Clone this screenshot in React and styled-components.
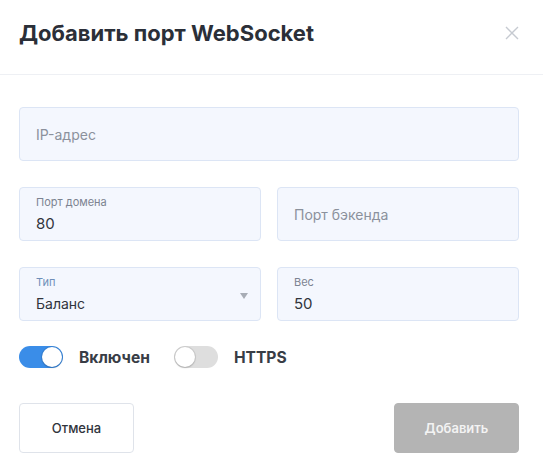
import React, { useState } from "react";
import styled, { createGlobalStyle } from "styled-components";

const Global = createGlobalStyle`
  html, body { margin: 0; padding: 0; background: #fff; }
  body { font-family: Inter, "Noto Sans", sans-serif; }
  * { box-sizing: border-box; }
`;

const Dialog = styled.div`
  width: 543px;
  background: #fff;
`;

const Header = styled.div`
  height: 75px;
  padding: 19px 24px 0 19px;
  display: flex;
  justify-content: space-between;
  align-items: flex-start;
  border-bottom: 1px solid #eef0f4;
`;

const Title = styled.h1`
  margin: 0;
  font-size: 22px;
  line-height: 28px;
  font-weight: 700;
  color: #2b2f38;
`;

const Close = styled.button`
  border: 0;
  background: none;
  padding: 0;
  margin-top: 7px;
  width: 14px;
  height: 14px;
  display: flex;
  cursor: pointer;
`;

const Body = styled.div`
  padding: 32px 24px 0 19px;
  display: flex;
  flex-direction: column;
  gap: 26px;
`;

const Row = styled.div`
  display: grid;
  grid-template-columns: ${(p) => (p.$cols === 2 ? "1fr 1fr" : "1fr")};
  gap: 16px;
`;

const Field = styled.div`
  position: relative;
  height: 54px;
  background: #f4f7fe;
  border: 1px solid #dce5f5;
  border-radius: 4px;
  padding: 0 16px;
  display: flex;
  flex-direction: column;
  justify-content: center;
`;

const Placeholder = styled.span`
  font-size: 14px;
  color: #8b919c;
`;

const Label = styled.span`
  font-size: 11px;
  line-height: 14px;
  color: ${(p) => (p.$accent ? "#6f8fb9" : "#7c8391")};
`;

const Value = styled.span`
  font-size: ${(p) => p.$size || 15}px;
  line-height: 20px;
  color: #30343c;
  margin-top: 5px;
`;

const Arrow = styled.span`
  position: absolute;
  right: 12px;
  top: 25px;
  width: 0;
  height: 0;
  border-left: 4px solid transparent;
  border-right: 4px solid transparent;
  border-top: 6px solid #a7acb5;
`;

const Toggles = styled.div`
  display: flex;
  align-items: center;
  margin-top: -1px;
`;

const ToggleGroup = styled.label`
  display: flex;
  align-items: center;
  gap: 16px;
  margin-right: 24px;
  cursor: pointer;
`;

const Track = styled.span`
  position: relative;
  width: 44px;
  height: 22px;
  border-radius: 11px;
  background: ${(p) => (p.$on ? "#3a8de8" : "#dedede")};
  display: block;
`;

const Knob = styled.span`
  position: absolute;
  top: 1px;
  left: ${(p) => (p.$on ? "23px" : "1px")};
  width: 20px;
  height: 20px;
  border-radius: 50%;
  background: #fff;
  box-shadow: 0 0 0 1px rgba(0, 0, 0, 0.08), 0 1px 2px rgba(0, 0, 0, 0.15);
`;

const ToggleText = styled.span`
  font-size: 15.6px;
  font-weight: 700;
  color: #383d46;
`;

const Footer = styled.div`
  display: flex;
  justify-content: space-between;
  margin-top: 9px;
`;

const Button = styled.button`
  height: 50px;
  width: ${(p) => p.$w}px;
  border-radius: 4px;
  font-family: inherit;
  font-size: 13px;
  font-weight: ${(p) => (p.$primary ? 600 : 500)};
  border: 1px solid ${(p) => (p.$primary ? "#b4b4b4" : "#dfe3ea")};
  background: ${(p) => (p.$primary ? "#b4b4b4" : "#fff")};
  color: ${(p) => (p.$primary ? "#f3f3f3" : "#30343c")};
`;

function Toggle({ on, label, onClick }) {
  return (
    <ToggleGroup onClick={onClick}>
      <Track $on={on}>
        <Knob $on={on} />
      </Track>
      <ToggleText>{label}</ToggleText>
    </ToggleGroup>
  );
}

export default function App() {
  const [enabled, setEnabled] = useState(true);
  const [https, setHttps] = useState(false);
  return (
    <>
      <Global />
      <Dialog>
        <Header>
          <Title>Добавить порт WebSocket</Title>
          <Close aria-label="close">
            <svg width="14" height="14" viewBox="0 0 14 14">
              <path d="M1 1L13 13M13 1L1 13" stroke="#c6cad1" strokeWidth="1.4" />
            </svg>
          </Close>
        </Header>
        <Body>
          <Row>
            <Field>
              <Placeholder>IP-адрес</Placeholder>
            </Field>
          </Row>
          <Row $cols={2}>
            <Field>
              <Label>Порт домена</Label>
              <Value>80</Value>
            </Field>
            <Field>
              <Placeholder>Порт бэкенда</Placeholder>
            </Field>
          </Row>
          <Row $cols={2}>
            <Field>
              <Label $accent>Тип</Label>
              <Value $size={14}>Баланс</Value>
              <Arrow />
            </Field>
            <Field>
              <Label>Вес</Label>
              <Value>50</Value>
            </Field>
          </Row>
          <Toggles>
            <Toggle on={enabled} label="Включен" onClick={() => setEnabled(!enabled)} />
            <Toggle on={https} label="HTTPS" onClick={() => setHttps(!https)} />
          </Toggles>
          <Footer>
            <Button $w={115}>Отмена</Button>
            <Button $w={125} $primary>Добавить</Button>
          </Footer>
        </Body>
      </Dialog>
    </>
  );
}
